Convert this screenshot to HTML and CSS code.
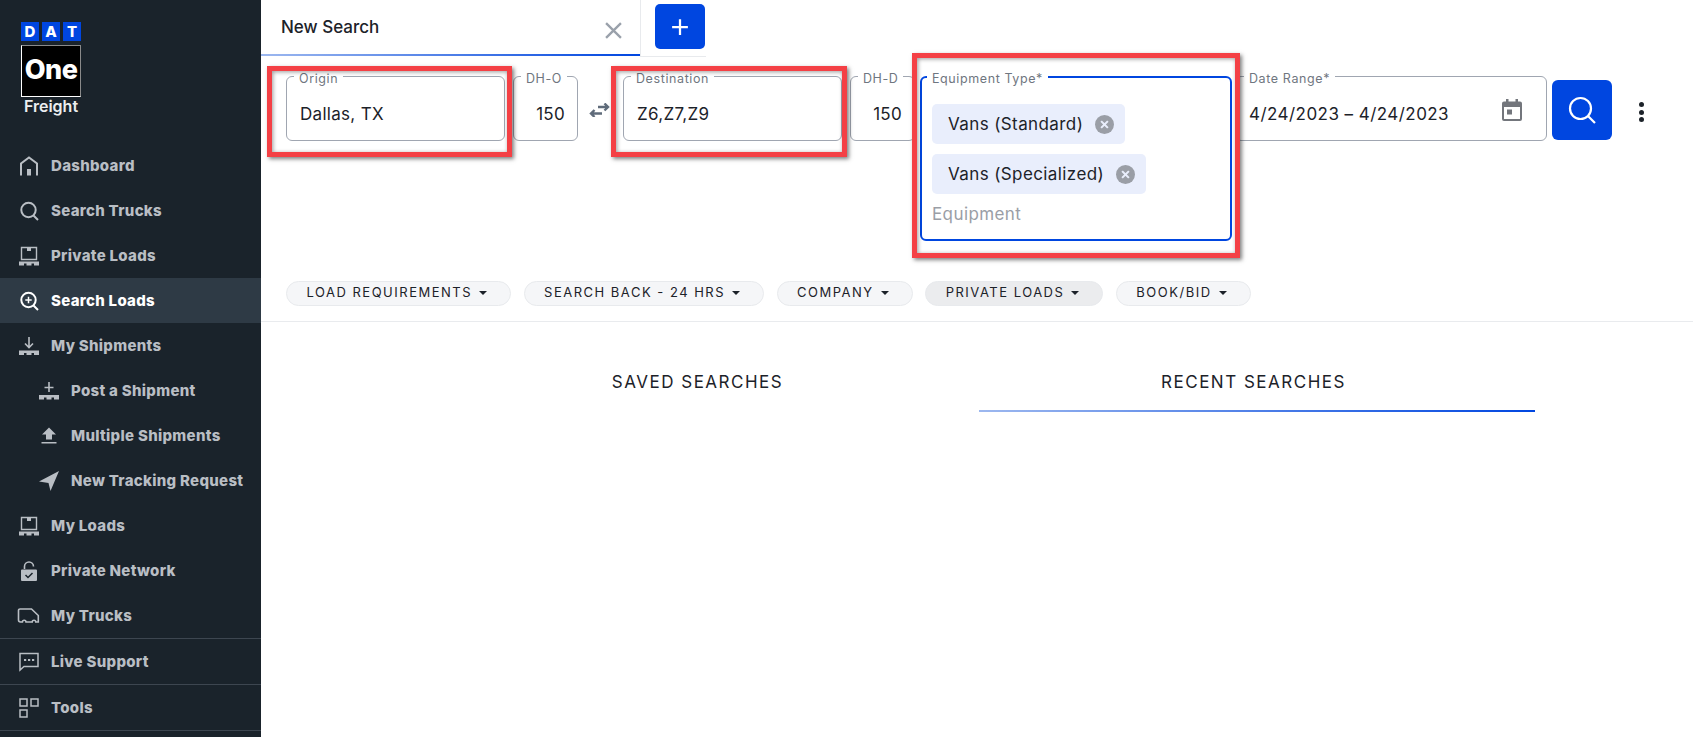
FILE: index.html
```html
<!DOCTYPE html>
<html lang="en">
<head>
  <meta charset="UTF-8">
  <title>DAT One Freight - Search Loads</title>
  <link rel="stylesheet" href="styles.css">
</head>
<body>

  <div class="app">

    <!-- Sidebar -->
    <aside class="sidebar">
      <div class="logo">
        <div class="logo-dat"><span>D</span><span>A</span><span>T</span></div>
        <div class="logo-one">One</div>
        <div class="logo-freight">Freight</div>
      </div>

      <nav class="nav">
        <a class="nav-item">
          <svg class="nav-icon" viewBox="0 0 20 20"><path d="M2 19.5V7.500L10 1.500l8 6v12" fill="none" stroke="currentColor" stroke-width="2"/><rect x="8" y="13" width="4" height="6.500" fill="currentColor"/></svg>
          Dashboard
        </a>
        <a class="nav-item">
          <svg class="nav-icon" viewBox="0 0 20 20"><circle cx="9.500" cy="9" r="7.200" fill="none" stroke="currentColor" stroke-width="2"/><path d="M14.500 14.500l4.500 4.500" stroke="currentColor" stroke-width="2"/></svg>
          Search Trucks
        </a>
        <a class="nav-item">
          <svg class="nav-icon" viewBox="0 0 20 20"><path d="M2.500 1.500h15v12h-15z" fill="none" stroke="currentColor" stroke-width="1.400"/><rect x="8" y="1.500" width="4" height="3.500" fill="currentColor"/><path d="M0 15.500h20v2H0zM0 17.500h5v2H0zM7.500 17.500h5v2h-5zM15 17.500h5v2h-5z" fill="currentColor"/></svg>
          Private Loads
        </a>
        <a class="nav-item is-active">
          <svg class="nav-icon" viewBox="0 0 20 20"><circle cx="9.500" cy="9" r="7.200" fill="none" stroke="currentColor" stroke-width="2"/><path d="M14.500 14.500l4.500 4.500" stroke="currentColor" stroke-width="2"/><path d="M9.500 5.800v6.400M6.300 9h6.400" stroke="currentColor" stroke-width="1.500"/></svg>
          Search Loads
        </a>
        <a class="nav-item">
          <svg class="nav-icon" viewBox="0 0 20 20"><path d="M10 1v10M6 7.500l4 4 4-4" fill="none" stroke="currentColor" stroke-width="1.600"/><path d="M0 14.500h20v2.500H0zM0 17h5v2H0zM7.500 17h5v2h-5zM15 17h5v2h-5z" fill="currentColor"/></svg>
          My Shipments
        </a>
        <a class="nav-item is-sub">
          <svg class="nav-icon" viewBox="0 0 20 20"><path d="M10 1v10M5.500 6.500h9" stroke="currentColor" stroke-width="1.600"/><path d="M0 14h20v2.500H0zM0 16.500h5v2H0zM7.500 16.500h5v2h-5zM15 16.500h5v2h-5z" fill="currentColor"/></svg>
          Post a Shipment
        </a>
        <a class="nav-item is-sub">
          <svg class="nav-icon" viewBox="0 0 20 20"><path d="M10 1.500l7 7h-4v5H7v-5H3zM2.500 16h15v1.600h-15z" fill="currentColor"/></svg>
          Multiple Shipments
        </a>
        <a class="nav-item is-sub">
          <svg class="nav-icon" viewBox="0 0 20 20"><path d="M20 0L0 10.500l9.500 1.500 2 8z" fill="currentColor"/></svg>
          New Tracking Request
        </a>
        <a class="nav-item">
          <svg class="nav-icon" viewBox="0 0 20 20"><path d="M2.500 1.500h15v12h-15z" fill="none" stroke="currentColor" stroke-width="1.400"/><rect x="8" y="1.500" width="4" height="3.500" fill="currentColor"/><path d="M0 15.500h20v2H0zM0 17.500h5v2H0zM7.500 17.500h5v2h-5zM15 17.500h5v2h-5z" fill="currentColor"/></svg>
          My Loads
        </a>
        <a class="nav-item">
          <svg class="nav-icon" viewBox="0 0 20 20"><path d="M5.500 8V5.500a4.500 4.500 0 0 1 9 0" fill="none" stroke="currentColor" stroke-width="1.600"/><path d="M3 8.500h14a1 1 0 0 1 1 1V19a1 1 0 0 1-1 1H3a1 1 0 0 1-1-1V9.500a1 1 0 0 1 1-1z" fill="currentColor"/><path d="M6.500 14l2.500 2.500 4.500-4.500" fill="none" stroke="#1a232b" stroke-width="1.500"/></svg>
          Private Network
        </a>
        <a class="nav-item">
          <svg class="nav-icon" viewBox="0 0 20 20"><path d="M1 3h11.500l6.800 6.500V16h-2.500a1.800 1.800 0 0 0-3.600 0H7a1.800 1.800 0 0 0-3.600 0H1.500a2 2 0 0 1-2-2V4.500A1.500 1.500 0 0 1 1 3z" fill="none" stroke="currentColor" stroke-width="1.600"/></svg>
          My Trucks
        </a>
        <a class="nav-item has-rule">
          <svg class="nav-icon" viewBox="0 0 20 20"><path d="M1 1.500h18v13H5L1 18z" fill="none" stroke="currentColor" stroke-width="1.500"/><path d="M5 7h2.200v2H5zM9 7h2.200v2H9zM13 7h2.200v2H13z" fill="currentColor"/></svg>
          Live Support
        </a>
        <a class="nav-item has-rule">
          <svg class="nav-icon" viewBox="0 0 20 20"><path d="M1 1h7v7H1zM12 1h7v7h-7zM1 12h7v7H1z" fill="none" stroke="currentColor" stroke-width="1.500"/></svg>
          Tools
        </a>
      </nav>
    </aside>

    <main class="content">

      <!-- Tab bar -->
      <div class="tabbar">
        <div class="search-tab">
          <span>New Search</span>
          <svg class="tab-close" viewBox="0 0 16 16"><path d="M1 1l14 14M15 1L1 15" stroke="currentColor" stroke-width="2.200"/></svg>
        </div>
        <div class="add-wrap">
          <button class="add-btn">
            <svg viewBox="0 0 16 16"><path d="M8 1v14M1 8h14" stroke="#fff" stroke-width="2"/></svg>
          </button>
        </div>
      </div>

      <!-- Search form -->
      <div class="search-row">
        <div class="field field-place">
          <span class="field-label">Origin</span>
          <span class="field-value">Dallas, TX</span>
          <span class="callout callout-origin"></span>
        </div>
        <div class="field field-dh">
          <span class="field-label">DH-O</span>
          <span class="field-value">150</span>
        </div>
        <div class="swap">
          <svg viewBox="0 0 22 14"><path d="M9 4h10M15.500.500L19 4l-3.500 3.500" fill="none" stroke="currentColor" stroke-width="2.400"/><path d="M13 10.500H2M5.500 7L2 10.500 5.500 14" fill="none" stroke="currentColor" stroke-width="2.400"/></svg>
        </div>
        <div class="field field-place">
          <span class="field-label">Destination</span>
          <span class="field-value">Z6,Z7,Z9</span>
          <span class="callout callout-destination"></span>
        </div>
        <div class="field field-dh field-dh-d">
          <span class="field-label">DH-D</span>
          <span class="field-value">150</span>
        </div>
        <div class="field field-equipment">
          <span class="field-label">Equipment Type*</span>
          <div class="tag">Vans (Standard)
            <svg class="tag-x" viewBox="0 0 18 18"><circle cx="9" cy="9" r="9" fill="#9a9ea6"/><path d="M5.800 5.800l6.400 6.400M12.200 5.800l-6.400 6.400" stroke="#e9eefc" stroke-width="2"/></svg>
          </div>
          <div class="tag">Vans (Specialized)
            <svg class="tag-x" viewBox="0 0 18 18"><circle cx="9" cy="9" r="9" fill="#9a9ea6"/><path d="M5.800 5.800l6.400 6.400M12.200 5.800l-6.400 6.400" stroke="#e9eefc" stroke-width="2"/></svg>
          </div>
          <div class="placeholder">Equipment</div>
          <span class="callout callout-equipment"></span>
        </div>
        <div class="field field-date">
          <span class="field-label">Date Range*</span>
          <span class="field-value">4/24/2023 – 4/24/2023</span>
          <svg class="calendar" viewBox="0 0 20 22"><path d="M4 0h2.500v2.500h7V0H16v2.500h2a2 2 0 0 1 2 2V20a2 2 0 0 1-2 2H2a2 2 0 0 1-2-2V4.500a2 2 0 0 1 2-2h2zM2 8v12h16V8z" fill="#73767c"/><rect x="5" y="10.500" width="5" height="5" fill="#73767c"/></svg>
        </div>
        <button class="search-btn">
          <svg viewBox="0 0 28 28"><circle cx="12.500" cy="12.500" r="10.500" fill="none" stroke="#fff" stroke-width="2.200"/><path d="M20 20l7 7" stroke="#fff" stroke-width="2.200"/></svg>
        </button>
        <div class="more"><i></i><i></i><i></i></div>
      </div>

      <!-- Filter chips -->
      <div class="chips">
        <button class="chip">LOAD REQUIREMENTS</button>
        <button class="chip">SEARCH BACK - 24 HRS</button>
        <button class="chip">COMPANY</button>
        <button class="chip is-open">PRIVATE LOADS</button>
        <button class="chip">BOOK/BID</button>
      </div>

      <!-- Saved / recent -->
      <div class="result-tabs">
        <div class="result-tab">SAVED SEARCHES</div>
        <div class="result-tab is-current">RECENT SEARCHES</div>
      </div>

    </main>
  </div>

</body>
</html>
```

FILE: styles.css
```css
* {
  box-sizing: border-box;
}

html, body {
  margin: 0;
  height: 100%;
  overflow: hidden;
}

body {
  background: #fff;
  color: #1c2229;
  font-family: Inter, "Liberation Sans", sans-serif;
}

.app {
  display: flex;
  height: 737px;
}

/* sidebar */
.sidebar {
  width: 261px;
  flex: none;
  background: #1a232b;
  color: #b9bec4;
}

.logo {
  width: 60px;
  height: 143px;
  margin-left: 21px;
  padding-top: 22px;
}

.logo-dat {
  display: flex;
  gap: 3px;
}

.logo-dat span {
  width: 18px;
  height: 19px;
  background: #0046e0;
  color: #fff;
  font-size: 15px;
  font-weight: 800;
  line-height: 19px;
  text-align: center;
}

.logo-one {
  height: 52px;
  margin-top: 4px;
  background: #000;
  border: 1px solid #fff;
  border-top-color: #8a8a8a;
  border-right-color: #8a8a8a;
  color: #fff;
  font-size: 27px;
  font-weight: 800;
  letter-spacing: -.5px;
  line-height: 48px;
  text-align: center;
}

.logo-freight {
  color: #eceef0;
  font-size: 16px;
  font-weight: 600;
  line-height: 19px;
  text-align: center;
  white-space: nowrap;
}

.nav-item {
  display: flex;
  align-items: center;
  gap: 12px;
  height: 45px;
  padding-left: 19px;
  font-size: 15px;
  font-weight: 800;
  letter-spacing: .3px;
  white-space: nowrap;
}

.nav-item.is-sub {
  padding-left: 39px;
}

.nav-item.is-active {
  background: #2e3a45;
  color: #fff;
}

.nav-item.has-rule {
  height: 46px;
  border-top: 1px solid #3d4650;
}

.nav-item.has-rule:last-child {
  height: 47px;
  border-bottom: 1px solid #3d4650;
}

.nav-icon {
  width: 20px;
  height: 20px;
  flex: none;
  overflow: visible;
}

/* main */
.content {
  flex: 1;
  min-width: 0;
}

.tabbar {
  display: flex;
  height: 57px;
}

.search-tab {
  position: relative;
  display: flex;
  align-items: center;
  justify-content: space-between;
  width: 380px;
  height: 57px;
  padding: 0 18px 3px 20px;
  border-right: 1px solid #e8eaed;
  font-size: 17px;
  font-weight: 500;
}

.search-tab::after {
  content: "";
  position: absolute;
  left: 0;
  right: 0;
  bottom: 1px;
  height: 2px;
  background: linear-gradient(90deg, #9db8ef, #0046e0);
}

.tab-close {
  width: 17px;
  height: 17px;
  margin-top: 6px;
  color: #9aa1ab;
}

.add-wrap {
  width: 65px;
  height: 57px;
  padding-left: 14px;
  padding-top: 4px;
  border-bottom: 1px solid #e8eaed;
}

.add-btn {
  display: flex;
  align-items: center;
  justify-content: center;
  width: 50px;
  height: 45px;
  padding: 0;
  border: 0;
  border-radius: 5px;
  background: #0046e0;
}

.add-btn svg {
  width: 18px;
  height: 18px;
}

.search-row {
  display: flex;
  align-items: flex-start;
  height: 224px;
  padding: 19px 0 0 25px;
}

.field {
  position: relative;
  height: 65px;
  padding: 11px 13px 0;
  border: 1px solid #a0a6b1;
  border-radius: 6px;
  background: #fff;
  font-size: 17px;
  letter-spacing: .3px;
  line-height: 52px;
}

.field-label {
  position: absolute;
  top: -5px;
  left: 7px;
  padding: 0 5px;
  background: #fff;
  color: #6f7680;
  font-size: 12.500px;
  letter-spacing: .6px;
  line-height: 14px;
  white-space: nowrap;
}

.field-place {
  width: 219px;
}

.field-dh {
  width: 65px;
  margin-left: 8px;
  padding-right: 12px;
  text-align: right;
}

.field-dh-d {
  margin-right: 5px;
}

.swap {
  display: flex;
  justify-content: center;
  width: 45px;
  padding-top: 27px;
  padding-right: 1px;
  color: #5f6b7a;
}

.swap svg {
  width: 22px;
  height: 14px;
}

.field-equipment {
  z-index: 1;
  width: 312px;
  height: 165px;
  padding: 26px 10px 0;
  border: 2px solid #0046e0;
  letter-spacing: .4px;
  line-height: 20px;
}

.field-equipment .field-label {
  top: -6px;
  left: 5px;
}

.tag {
  display: flex;
  align-items: center;
  justify-content: space-between;
  width: fit-content;
  height: 40px;
  margin-bottom: 10px;
  padding: 0 11px 0 16px;
  gap: 12px;
  border-radius: 5px;
  background: #e9eefc;
}

.tag-x {
  width: 19px;
  height: 19px;
  flex: none;
}

.placeholder {
  margin-top: 4px;
  color: #9a9ea6;
}

.field-date {
  display: flex;
  align-items: center;
  justify-content: space-between;
  width: 312px;
  margin-left: 3px;
  padding-right: 24px;
  letter-spacing: .45px;
}

.field-date .field-label {
  left: 8px;
}

.calendar {
  width: 20px;
  height: 22px;
  margin-top: -8px;
}

/* red marks drawn over the form */
.callout {
  position: absolute;
  z-index: 2;
  border: 5px solid #f44045;
  box-shadow: 2px 2px 4px rgba(0, 0, 0, .5), inset 1px 1px 4px rgba(0, 0, 0, .4);
  pointer-events: none;
}

.callout-origin {
  inset: -11px -8px -17px -20px;
}

.callout-destination {
  inset: -11px -6px -17px -13px;
}

.callout-equipment {
  inset: -25px -10px -19px -10px;
}

.search-btn {
  display: flex;
  align-items: center;
  justify-content: center;
  width: 60px;
  height: 60px;
  margin: 4px 0 0 5px;
  padding: 0;
  border: 0;
  border-radius: 6px;
  background: #0046e0;
}

.search-btn svg {
  width: 28px;
  height: 28px;
}

.more {
  display: flex;
  flex-direction: column;
  gap: 2.500px;
  margin: 26px 0 0 27px;
}

.more i {
  width: 5px;
  height: 5px;
  border-radius: 50%;
  background: #1c2229;
}

.chips {
  display: flex;
  gap: 12.500px;
  height: 41px;
  padding-left: 25px;
  border-bottom: 1px solid #e9ebee;
}

.chip {
  height: 25px;
  padding: 0 23px 3px 19.500px;
  border: 1px solid #e8eaed;
  border-radius: 13px;
  background: #f5f6f8;
  color: #1c2229;
  font-family: inherit;
  font-size: 13px;
  font-weight: 400;
  letter-spacing: 1.500px;
  white-space: nowrap;
}

.chip.is-open {
  background: #ebecee;
}

.chip::after {
  content: "";
  display: inline-block;
  margin-left: 7px;
  border: 4px solid transparent;
  border-top: 4px solid #1c2229;
  border-bottom: 0;
  vertical-align: 2px;
}

.result-tabs {
  display: flex;
  justify-content: center;
  gap: 3px;
  margin-top: 33px;
}

.result-tab {
  width: 556px;
  height: 57px;
  padding-top: 17px;
  font-size: 17px;
  font-weight: 400;
  letter-spacing: 1.500px;
  line-height: 20px;
  text-align: center;
}

.result-tab.is-current {
  padding-right: 6px;
  background: linear-gradient(90deg, #9db8ef, #0046e0) bottom / 100% 2px no-repeat;
}
```
